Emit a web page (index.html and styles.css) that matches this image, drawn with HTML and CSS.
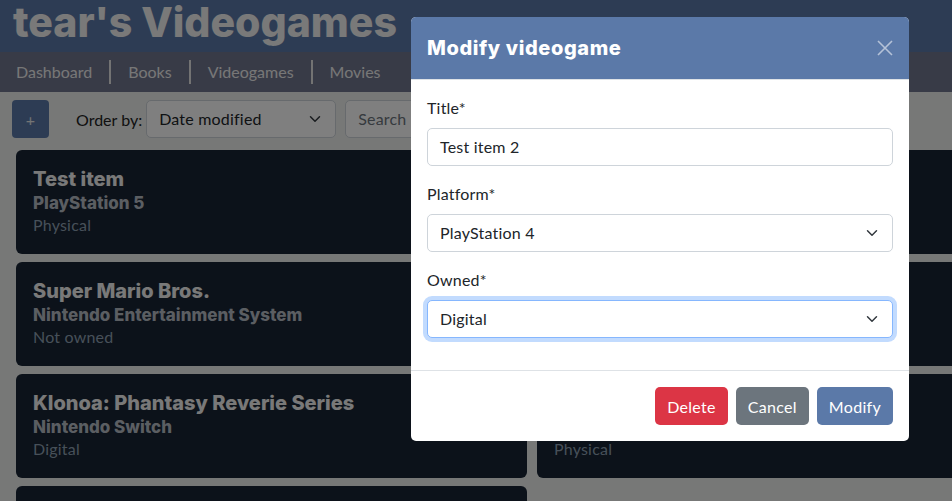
FILE: index.html
```html
<!DOCTYPE html>
<html lang="en">
<head>
<meta charset="utf-8">
<title>tear's Videogames</title>
<link rel="stylesheet" href="styles.css">
</head>
<body>
<header class="topbar">
  <h1 class="brand">tear's Videogames</h1>
</header>
<nav class="navbar">
  <a class="nav-link">Dashboard</a>
  <a class="nav-link">Books</a>
  <a class="nav-link">Videogames</a>
  <a class="nav-link">Movies</a>
</nav>
<main class="content">
  <div class="toolbar">
    <button class="btn-add">+</button>
    <span class="order-label">Order by:</span>
    <div class="form-select order-select">
      <span>Date modified</span>
      <svg class="chev" viewBox="0 0 16 16" width="16" height="12"><path d="m2 5 6 6 6-6" fill="none" stroke="#343a40" stroke-width="2" stroke-linecap="round" stroke-linejoin="round"/></svg>
    </div>
    <div class="form-control search">Search</div>
  </div>
  <div class="grid">
    <div class="card"><div class="card-title">Test item</div><div class="card-sub">PlayStation 5</div><div class="card-meta">Physical</div></div>
    <div class="card"><div class="card-title">Test item 2</div><div class="card-sub">PlayStation 4</div><div class="card-meta">Digital</div></div>
    <div class="card"><div class="card-title">Super Mario Bros.</div><div class="card-sub">Nintendo Entertainment System</div><div class="card-meta">Not owned</div></div>
    <div class="card"><div class="card-title">The Legend of Zelda</div><div class="card-sub">Nintendo Switch</div><div class="card-meta">Digital</div></div>
    <div class="card"><div class="card-title">Klonoa: Phantasy Reverie Series</div><div class="card-sub">Nintendo Switch</div><div class="card-meta">Digital</div></div>
    <div class="card"><div class="card-title">Elden Ring</div><div class="card-sub">PlayStation 5</div><div class="card-meta">Physical</div></div>
    <div class="card"><div class="card-title">Hollow Knight</div><div class="card-sub">PC</div><div class="card-meta">Digital</div></div>
  </div>
</main>

<div class="backdrop"></div>

<div class="modal">
  <div class="modal-header">
    <h5 class="modal-title">Modify videogame</h5>
    <button class="btn-close" aria-label="Close">
      <svg viewBox="0 0 16 16" width="16" height="16"><path d="M1 1 15 15M15 1 1 15" stroke="currentColor" stroke-width="1.6" fill="none"/></svg>
    </button>
  </div>
  <div class="modal-body">
    <div class="field">
      <label class="form-label">Title*</label>
      <div class="form-control">Test item 2</div>
    </div>
    <div class="field">
      <label class="form-label">Platform*</label>
      <div class="form-select">
        <span>PlayStation 4</span>
        <svg class="chev" viewBox="0 0 16 16" width="16" height="12"><path d="m2 5 6 6 6-6" fill="none" stroke="#343a40" stroke-width="2" stroke-linecap="round" stroke-linejoin="round"/></svg>
      </div>
    </div>
    <div class="field">
      <label class="form-label">Owned*</label>
      <div class="form-select focused">
        <span>Digital</span>
        <svg class="chev" viewBox="0 0 16 16" width="16" height="12"><path d="m2 5 6 6 6-6" fill="none" stroke="#343a40" stroke-width="2" stroke-linecap="round" stroke-linejoin="round"/></svg>
      </div>
    </div>
  </div>
  <div class="modal-footer">
    <button class="btn btn-danger">Delete</button>
    <button class="btn btn-secondary">Cancel</button>
    <button class="btn btn-primary">Modify</button>
  </div>
</div>
</body>
</html>
```

FILE: styles.css
```css
* {
  box-sizing: border-box;
}

html, body {
  margin: 0;
  width: 952px;
  height: 501px;
  overflow: hidden;
}

body {
  position: relative;
  background: #eef1ef;
  font-family: "Lato", "Open Sans", sans-serif;
  font-size: 16px;
  color: #212529;
}

.topbar {
  background: #5b79a8;
  height: 52px;
  padding: 0 13px;
}

.brand {
  margin: 0;
  font-family: "Inter", "DejaVu Sans", sans-serif;
  font-weight: 800;
  font-size: 41px;
  line-height: 44px;
  color: #f3f3f3;
  letter-spacing: 0;
}

.navbar {
  background: #70768e;
  height: 40px;
  display: flex;
  align-items: center;
}

.nav-link {
  color: #eeeeee;
  padding: 0 17px;
  line-height: 24px;
  border-left: 2px solid #e6e6e6;
}

.nav-link:first-child {
  border-left: none;
  padding-left: 16px;
}

.content {
  padding: 8px 0;
}

.toolbar {
  display: flex;
  align-items: center;
  height: 38px;
  padding: 0 12px;
}

.btn-add {
  width: 37px;
  height: 38px;
  border: none;
  border-radius: 4px;
  background: #5b79a8;
  color: #e8e8e8;
  font-size: 16px;
  font-family: inherit;
  padding: 0;
}

.order-label {
  margin-left: 27px;
  margin-right: 4px;
  color: #222;
}

.form-select,
.form-control {
  height: 38px;
  border: 1px solid #ced4da;
  border-radius: 5px;
  background: #fff;
  padding: 0 12px;
  display: flex;
  align-items: center;
  color: #212529;
  line-height: 24px;
  letter-spacing: 0.2px;
}

.form-select {
  justify-content: space-between;
}

.chev {
  display: block;
  flex: none;
}

.order-select {
  width: 190px;
}

.search {
  width: 260px;
  margin-left: 9px;
  color: #6c757d;
}

.grid {
  display: grid;
  grid-template-columns: 511px 511px;
  column-gap: 10px;
  row-gap: 8px;
  padding: 12px 16px 0;
}

.card {
  background: #182434;
  border-radius: 6px;
  height: 104px;
  padding: 16px 17px;
}

.card-title {
  font-family: "Inter", "DejaVu Sans", sans-serif;
  font-weight: 800;
  font-size: 20px;
  line-height: 26px;
  color: #f3f3f3;
}

.card-sub {
  font-family: "Inter", "DejaVu Sans", sans-serif;
  font-weight: 800;
  font-size: 17px;
  line-height: 22px;
  color: #b6bcc4;
}

.card-meta {
  font-size: 16px;
  line-height: 22px;
  color: #8fa0b3;
  letter-spacing: 0.2px;
}

.backdrop {
  position: fixed;
  inset: 0;
  background: rgba(0, 0, 0, 0.5);
}

.modal {
  position: absolute;
  left: 411px;
  top: 17px;
  width: 498px;
  background: #fff;
  border-radius: 5px;
  overflow: hidden;
}

.modal-header {
  background: #5b79a8;
  height: 63px;
  padding: 0 16px;
  display: flex;
  align-items: center;
  justify-content: space-between;
  border-bottom: 1px solid #dee2e6;
}

.modal-title {
  margin: 0;
  font-family: "Inter", "DejaVu Sans", sans-serif;
  font-weight: 800;
  font-size: 20px;
  letter-spacing: 0.6px;
  color: #ffffff;
}

.btn-close {
  background: none;
  border: none;
  padding: 0;
  width: 16px;
  height: 16px;
  color: rgba(255, 255, 255, 0.55);
}

.btn-close svg {
  display: block;
}

.modal-body {
  padding: 16px 16px 32px;
  display: flex;
  flex-direction: column;
  gap: 16px;
}

.field {
  display: flex;
  flex-direction: column;
}

.form-label {
  line-height: 24px;
  margin-bottom: 8px;
  letter-spacing: 0.2px;
}

.focused {
  border-color: #86b7fe;
  box-shadow: 0 0 0 4px rgba(13, 110, 253, 0.25);
}

.modal-footer {
  border-top: 1px solid #dee2e6;
  display: flex;
  justify-content: flex-end;
  gap: 8px;
  padding: 16px;
}

.btn {
  height: 38px;
  padding: 0 12px;
  border: none;
  border-radius: 5px;
  font-family: inherit;
  font-size: 16px;
  letter-spacing: 0.3px;
  color: #fff;
}

.btn-danger {
  background: #dc3545;
}

.btn-secondary {
  background: #6c757d;
}

.btn-primary {
  background: #5b79a8;
}
```
